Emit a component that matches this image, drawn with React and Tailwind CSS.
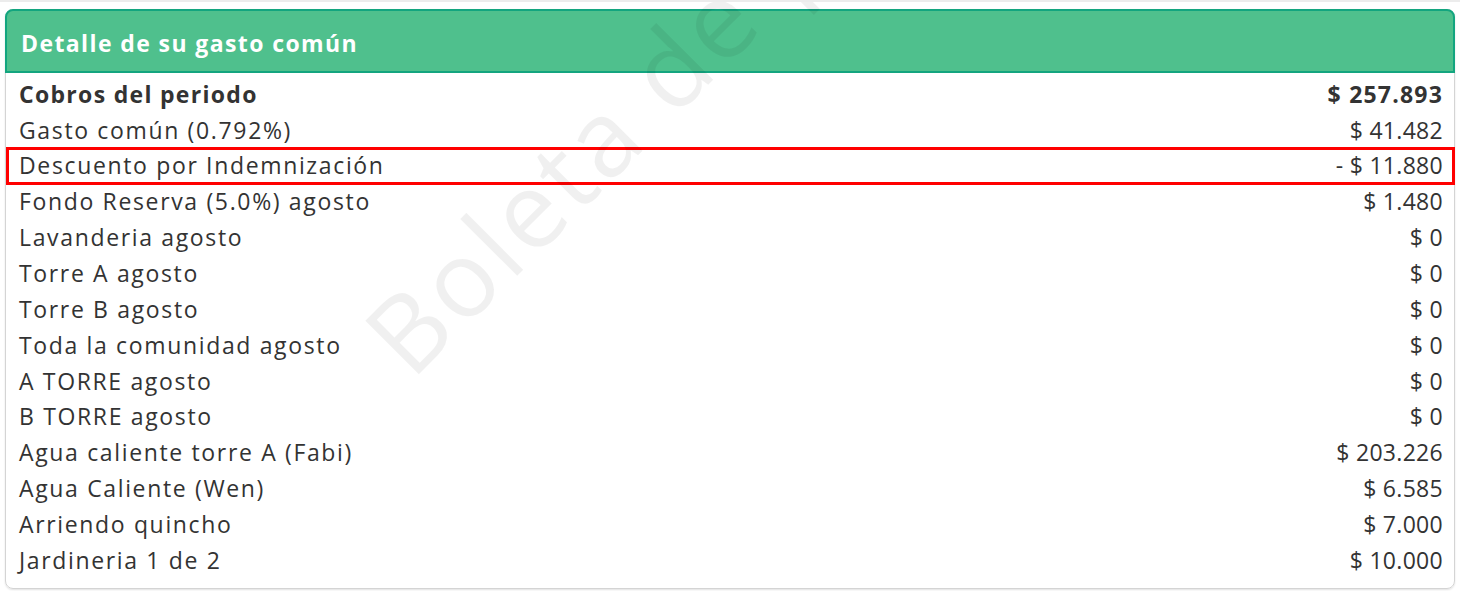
import React from 'react'

const rows = [
  { label: 'Gasto común (0.792%)', value: '$ 41.482' },
  { label: 'Descuento por Indemnización', value: '- $ 11.880', highlight: true },
  { label: 'Fondo Reserva (5.0%) agosto', value: '$ 1.480' },
  { label: 'Lavanderia agosto', value: '$ 0' },
  { label: 'Torre A agosto', value: '$ 0' },
  { label: 'Torre B agosto', value: '$ 0' },
  { label: 'Toda la comunidad agosto', value: '$ 0' },
  { label: 'A TORRE agosto', value: '$ 0' },
  { label: 'B TORRE agosto', value: '$ 0' },
  { label: 'Agua caliente torre A (Fabi)', value: '$ 203.226' },
  { label: 'Agua Caliente (Wen)', value: '$ 6.585' },
  { label: 'Arriendo quincho', value: '$ 7.000' },
  { label: 'Jardineria 1 de 2', value: '$ 10.000' },
]

export default function App() {
  return (
    <div className="relative min-h-screen overflow-hidden bg-white border-t-2 border-[#ececec] text-[#333] font-['Open_Sans',sans-serif]">
      <div className="mx-[5px] mt-[7px] rounded-lg border border-[#d4d4d4] shadow-[0_1px_2px_rgba(0,0,0,0.12)] pb-[10px]">
        <div className="h-[64px] -m-px rounded-t-lg border-2 border-[#13a57f] bg-[#4fc08d] pl-[14px] pt-[4px] flex items-center text-white font-bold text-[23px] tracking-[1.4px]">
          Detalle de su gasto común
        </div>
        <div className="flex flex-col pt-[4px]">
          <div className="h-[35.85px] pl-[13px] pr-[11px] flex items-center justify-between font-bold text-[23px]">
            <span className="tracking-[1.3px]">Cobros del periodo</span>
            <span className="tracking-[1.2px]">$ 257.893</span>
          </div>
          {rows.map((r) => (
            <div
              key={r.label}
              className={
                r.highlight
                  ? 'h-[38px] -my-px -mr-px pl-[10px] pr-[9px] flex items-center justify-between text-[23px] border-[3px] border-[#ff0000]'
                  : 'h-[35.85px] pl-[13px] pr-[11px] flex items-center justify-between text-[23px]'
              }
            >
              <span className="tracking-[1.65px]">{r.label}</span>
              <span className="tracking-[0.3px]">{r.value}</span>
            </div>
          ))}
        </div>
      </div>
      <div className="pointer-events-none absolute left-[420px] top-[282px] origin-bottom-left -rotate-45 whitespace-nowrap text-[106px] leading-none tracking-[4px] text-black/[0.06]">
        Boleta de prueba
      </div>
    </div>
  )
}
